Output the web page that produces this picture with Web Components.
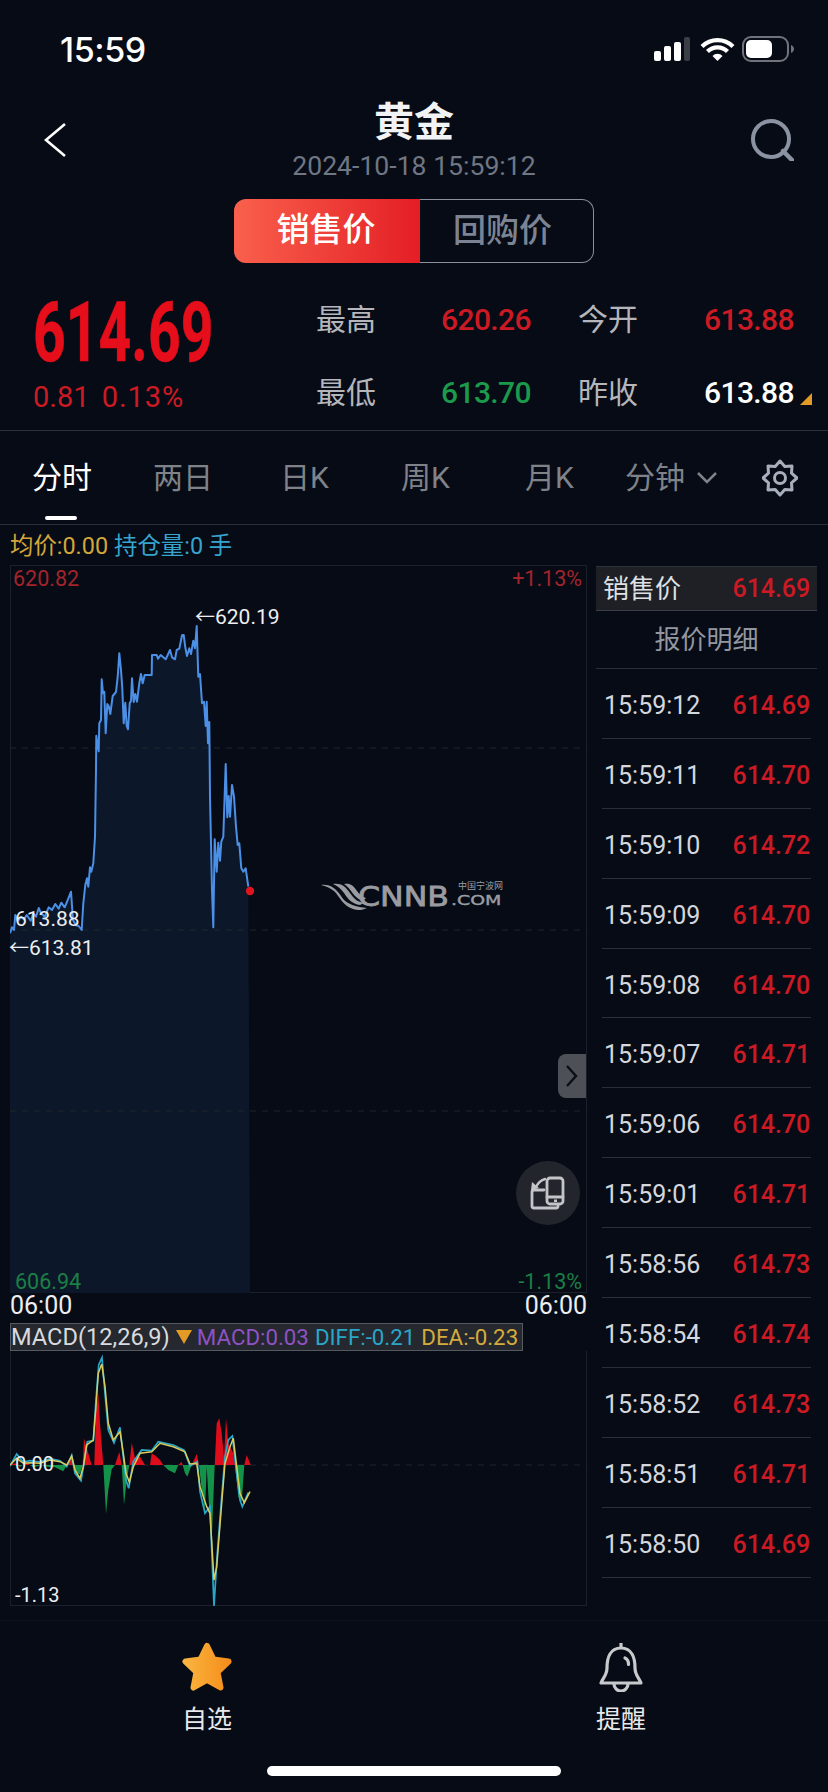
<!DOCTYPE html>
<html lang="zh">
<head>
<meta charset="utf-8">
<title>黄金</title>
<style>
  html, body { margin: 0; padding: 0; background: #070b15; }
  body { width: 828px; height: 1792px; overflow: hidden; font-family: Roboto, "Noto Sans CJK SC", sans-serif; color: #fff; }
</style>
</head>
<body>
<gold-page></gold-page>

<script>
const FONT = 'Roboto, "Noto Sans CJK SC", sans-serif';

// SHORTHAND FOR AN ELEMENT WHOSE SHADOW ROOT IS FIXED MARKUP
function shadowElement(tag, html) {
  customElements.define(tag, class extends HTMLElement {
    constructor() {
      super();
      this.attachShadow({ mode: 'open' }).innerHTML = html;
    }
  });
}

shadowElement('status-bar', `
  <style>
    :host { display: flex; height: 92px; box-sizing: border-box; padding: 32px 32px 0 60px; justify-content: space-between; align-items: flex-start; }
    .time { font: 500 34px/36px Inter, Roboto, sans-serif; letter-spacing: -.4px; }
    svg { display: block; margin-top: 4px; }
  </style>
  <span class="time">15:59</span>
  <svg width="142" height="26" viewBox="0 0 142 26">
    <rect x="0" y="15" width="7" height="10" rx="2" fill="#fff"/>
    <rect x="10" y="10" width="7" height="15" rx="2" fill="#fff"/>
    <rect x="20" y="6" width="7" height="19" rx="2" fill="#fff"/>
    <rect x="30" y="1" width="6" height="24" rx="2" fill="#3b3e45"/>
    <path d="M48 10.500a22 22 0 0 1 31 0" fill="none" stroke="#fff" stroke-width="4.200"/>
    <path d="M53.500 15.500a14 14 0 0 1 20 0" fill="none" stroke="#fff" stroke-width="4.200"/>
    <path d="M58.500 20a6.500 6.500 0 0 1 10 0l-5 5z" fill="#fff"/>
    <rect x="89" y="1" width="45" height="24" rx="8" fill="none" stroke="#70737c" stroke-width="2"/>
    <rect x="92" y="4" width="26" height="18" rx="5" fill="#fff"/>
    <path d="M137 9c2 1 3 2.500 3 4s-1 3-3 4z" fill="#70737c"/>
  </svg>
`);

shadowElement('price-switch', `
  <style>
    :host { display: flex; width: 360px; height: 64px; box-sizing: border-box; font: 500 33px/62px ${FONT}; }
    div { text-align: center; box-sizing: border-box; }
    .on { width: 186px; background: linear-gradient(90deg, #f9604c, #e41e25); border-radius: 12px 0 0 12px; color: #fff; padding-right: 2px; }
    .off { flex: 1; border: 1px solid #8a909c; border-left: 0; border-radius: 0 12px 12px 0; color: #7c8494; padding-right: 8px; }
  </style>
  <div class="on">销售价</div>
  <div class="off">回购价</div>
`);

shadowElement('quote-header', `
  <style>
    :host { display: block; height: 178px; position: relative; }
    .bar { display: grid; grid-template-columns: 1fr auto 1fr; padding: 0 44px; }
    .mid { padding-top: 6px; text-align: center; }
    h1 { margin: 0; font: 700 40px/50px ${FONT}; color: #f2f3f5; }
    .date { margin-top: 3px; font: 400 26.600px/30px Roboto, sans-serif; color: #6f7684; }
    .back { margin-top: 31px; }
    .search { margin: 27px -10px 0 0; justify-self: end; }
    price-switch { margin: 18px auto 0; }
  </style>
  <div class="bar">
    <svg class="back" width="22" height="34" viewBox="0 0 22 34"><path d="M21 1L2 17l19 16" fill="none" stroke="#fff" stroke-width="2.600"/></svg>
    <div class="mid"><h1>黄金</h1><div class="date">2024-10-18 15:59:12</div></div>
    <svg class="search" width="46" height="42" viewBox="0 0 46 42"><circle cx="23" cy="20" r="18" fill="none" stroke="#8b93a3" stroke-width="4"/><path d="M35 32l9 9" stroke="#8b93a3" stroke-width="4.500" stroke-linecap="round"/></svg>
  </div>
  <price-switch></price-switch>
`);

shadowElement('price-panel', `
  <style>
    :host { display: flex; height: 161px; box-sizing: border-box; border-bottom: 1px solid #2a2f3b; }
    .left { width: 316px; padding: 28px 0 0 33px; box-sizing: border-box; }
    .big { font: 700 84px/70px Roboto, sans-serif; color: #e60e1b; transform: scaleX(.68); transform-origin: left; white-space: nowrap; -webkit-text-stroke: .6px #e60e1b; }
    .sub { margin-top: 14px; font: 400 29px/30px Roboto, sans-serif; color: #cc1a24; white-space: nowrap; word-spacing: 5px; }
    .sub span { letter-spacing: .9px; }
    .grid { display: grid; grid-template-columns: 125px 137px 126px auto; grid-auto-rows: 50px; row-gap: 23px; padding-top: 25px; font: 400 30px/50px ${FONT}; color: #b4b6bb; }
    .num { font: 500 30px/50px Roboto, sans-serif; letter-spacing: -.6px; }
    .red { color: #cc1a24; } .green { color: #1c9a4b; } .white { color: #fff; position: relative; }
    .white::after { content: ""; position: absolute; left: 96px; top: 25px; border-style: solid; border-width: 0 0 12px 12px; border-color: transparent transparent #e49b26 transparent; }
  </style>
  <div class="left">
    <div class="big">614.69</div>
    <div class="sub">0.81 <span>0.13%</span></div>
  </div>
  <div class="grid">
    <span>最高</span><span class="num red">620.26</span><span>今开</span><span class="num red">613.88</span>
    <span>最低</span><span class="num green">613.70</span><span>昨收</span><span class="num white">613.88</span>
  </div>
`);

shadowElement('period-tabs', `
  <style>
    :host { display: grid; grid-template-columns: 121px 129px 119px 124px 100px 137px auto; height: 94px; box-sizing: border-box; padding-left: 32px; border-bottom: 1px solid #2a2f3b; font: 400 30px/94px ${FONT}; color: #7f8289; }
    .on { color: #fff; position: relative; }
    .on::after { content: ""; position: absolute; left: 13px; top: 85px; width: 32px; height: 4px; border-radius: 2px; background: #fff; }
    .more { display: flex; align-items: center; gap: 12px; height: 94px; }
    svg { display: block; }
    .gear { margin: 28px 0 0 0; }
    .k { margin-left: -2px; }
  </style>
  <span class="on">分时</span><span>两日</span><span class="k">日K</span><span>周K</span><span>月K</span>
  <span class="more">分钟<svg width="20" height="12" viewBox="0 0 20 12"><path d="M1 1l9 9 9-9" fill="none" stroke="#7f8289" stroke-width="2.500"/></svg></span>
  <svg class="gear" width="36" height="38" viewBox="0 0 36 38">
    <path d="M18 2L22.800 7.500 30 7 29.500 14.200 35 19 29.500 23.800 30 31 22.800 30.500 18 36 13.200 30.500 6 31 6.500 23.800 1 19 6.500 14.200 6 7 13.200 7.500Z" fill="none" stroke="#a8aebb" stroke-width="3" stroke-linejoin="round"/>
    <circle cx="18" cy="19" r="5.500" fill="none" stroke="#a8aebb" stroke-width="3"/>
  </svg>
`);

// MAIN CHART POINTS, TAKEN AT 3X FROM THE PAGE ORIGIN OF THE CHART CROP (0,570)
const LINE = [[30,1090],[36,1072],[42,1080],[46,1035],[55,1052],[62,1040],[72,1048],[80,1035],[92,1052],[100,1030],[108,1040],[116,1014],[122,1028],[134,1040],[146,1012],[156,1020],[166,1002],[176,1016],[184,998],[194,1012],[204,988],[213,965],[219,1050],[228,1066],[236,1068],[245,1080],[250,1000],[256,945],[261,925],[265,950],[270,892],[274,905],[280,880],[285,800],[288,600],[289,497],[292,520],[296,544],[298,460],[303,450],[305,328],[309,370],[313,365],[317,490],[322,402],[326,408],[331,432],[338,378],[348,366],[353,320],[358,250],[363,300],[367,355],[371,460],[376,398],[380,468],[384,478],[389,400],[393,392],[396,325],[401,396],[406,372],[411,395],[418,340],[423,312],[428,340],[434,315],[455,315],[456,255],[470,255],[474,266],[482,255],[490,262],[497,268],[510,240],[516,262],[525,268],[530,240],[538,236],[546,196],[551,195],[556,232],[561,258],[568,235],[573,252],[580,212],[585,235],[590,168],[595,320],[600,312],[606,400],[612,395],[617,468],[620,395],[624,520],[628,456],[630,680],[636,960],[640,1072],[644,808],[650,905],[655,818],[660,872],[664,815],[670,800],[677,582],[682,742],[686,678],[690,740],[696,645],[702,680],[708,770],[713,825],[718,820],[724,895],[730,905],[737,895],[745,950]];
const HIST = [[30,465],[45,460],[60,470],[80,458],[100,472],[125,465],[140,470],[165,472],[190,484],[200,465],[215,438],[225,488],[240,492],[248,465],[252,385],[262,420],[275,465],[283,465],[288,300],[295,250],[300,340],[310,465],[318,612],[325,540],[335,478],[345,465],[358,425],[365,465],[372,585],[380,510],[388,465],[395,398],[405,445],[420,440],[435,465],[450,465],[455,430],[470,440],[480,450],[490,465],[505,480],[525,490],[535,465],[545,455],[555,490],[562,500],[575,465],[590,432],[597,465],[605,540],[615,600],[620,470],[628,600],[636,670],[644,465],[650,340],[658,325],[665,370],[672,440],[678,325],[685,400],[700,430],[705,465],[715,560],[725,575],[733,465],[740,435],[752,465]];
const DEA = [[30,465],[50,445],[70,460],[90,458],[120,460],[150,450],[180,455],[200,465],[215,438],[225,480],[240,505],[250,470],[260,405],[280,390],[287,300],[295,190],[305,162],[315,230],[325,340],[340,390],[360,365],[370,430],[378,490],[388,517],[400,470],[420,430],[455,425],[480,400],[520,410],[555,425],[570,462],[590,460],[600,530],[620,590],[630,610],[642,810],[650,770],[665,580],[675,460],[690,410],[700,385],[710,470],[720,550],[733,578],[750,545]];
const DIFF = [[30,468],[50,432],[70,456],[90,452],[120,456],[150,446],[180,452],[200,470],[215,436],[225,490],[243,512],[252,460],[262,395],[280,392],[288,270],[296,165],[306,143],[316,260],[325,360],[342,398],[360,352],[370,440],[378,510],[386,535],[400,455],[425,420],[455,422],[475,395],[520,405],[552,420],[570,468],[592,455],[600,545],[615,610],[630,590],[642,888],[652,730],[665,560],[675,440],[685,390],[697,378],[710,490],[720,570],[727,590],[745,548]];

function toPath(points, ox, oy) {
  return points.map((p, i) => (i ? 'L' : 'M') + (p[0] / 3 + ox).toFixed(1) + ' ' + (p[1] / 3 + oy).toFixed(1)).join('');
}

customElements.define('time-chart', class extends HTMLElement {
  constructor() {
    super();
    const line = toPath(LINE, -10, 5);
    this.attachShadow({ mode: 'open' }).innerHTML = `
      <style>
        :host { display: block; position: relative; width: 577px; height: 728px; box-sizing: border-box; border: 1px solid #1b202b; font: 400 21px/24px Roboto, sans-serif; }
        .plot { display: block; position: absolute; left: -1px; top: -1px; }
        span { position: absolute; white-space: nowrap; }
        span em { font: 400 20px/24px "Noto Sans CJK SC", sans-serif; }
        .r { color: #a3242b; font-size: 21.500px; } .g { color: #1c7f45; font-size: 21.500px; } .w { color: #eceef1; }
        .hand { position: absolute; right: 0; top: 488px; width: 28px; height: 44px; border-radius: 8px 0 0 8px; background: #4e5057; display: flex; align-items: center; justify-content: center; }
        .rotate { position: absolute; left: 505px; top: 595px; }
        .logo { position: absolute; left: 310px; top: 316px; height: 30px; width: 184px; color: #9a9ca1; }
        .logo svg { display: block; }
        .logo b { position: absolute; left: 37px; top: 0; font: 400 27px/30px "DejaVu Sans", sans-serif; -webkit-text-stroke: .8px #9a9ca1; transform: scaleX(1.170); transform-origin: left; }
        .logo i { position: absolute; left: 130px; top: 6px; font: 400 14px/24px "DejaVu Sans", sans-serif; font-style: normal; -webkit-text-stroke: .4px #9a9ca1; transform: scaleX(1.350); transform-origin: left; }
        .logo u { position: absolute; left: 137px; top: -3px; text-decoration: none; font: 400 9px/14px "Noto Sans CJK SC", sans-serif; }
      </style>
      <svg class="plot" width="577" height="728" viewBox="0 0 577 728">
        <path d="${line}L240 728L0 728Z" fill="#0c1829"/>
        <g stroke="#20242d" stroke-width="1" stroke-dasharray="6 6">
          <path d="M0 183H577M0 365H577M0 546H577"/>
        </g>
        <path d="${line}" fill="none" stroke="#4b8fe6" stroke-width="2" stroke-linejoin="round"/>
        <circle cx="240" cy="326" r="4.200" fill="#e0141e"/>
      </svg>
      <span class="r" style="left:2px;top:1px">620.82</span>
      <span class="r" style="right:4px;top:1px">+1.13%</span>
      <span class="w" style="left:184px;top:38px"><em>←</em>620.19</span>
      <span class="w" style="left:4px;top:341px">613.88</span>
      <span class="w" style="left:-2px;top:369px"><em>←</em>613.81</span>
      <span class="g" style="left:4px;bottom:-2px">606.94</span>
      <span class="g" style="right:4px;bottom:-2px">-1.13%</span>
      <div class="logo">
        <svg width="50" height="30" viewBox="0 0 50 30"><path d="M0 3c10-1 15 4 20 11 4 6 9 10 26 12-4 2-9 3-14 1C22 24 19 15 13 9 9 6 5 4 0 3zM12 2c8-1 12 2 17 9 4 6 8 9 14 10l-4 2c-8-1-12-6-16-12-3-4-6-7-11-9zM23 2c6-1 9 1 13 7 3 4 5 6 9 7l-3 3c-6-2-9-6-12-10-2-3-4-5-7-7z" fill="#9a9ca1"/></svg>
        <b>CNNB</b><i>.COM</i><u>中国宁波网</u>
      </div>
      <div class="hand"><svg width="14" height="24" viewBox="0 0 14 24"><path d="M2 2l9 10-9 10" fill="none" stroke="#0b0e15" stroke-width="2.400"/></svg></div>
      <svg class="rotate" width="64" height="64" viewBox="0 0 64 64">
        <circle cx="32" cy="32" r="32" fill="#22252c"/>
        <g fill="none" stroke="#c3c5c9" stroke-width="2.800" stroke-linejoin="round" stroke-linecap="round">
          <rect x="31" y="17" width="16" height="26" rx="3"/>
          <path d="M31 36H47"/>
          <path d="M28 29H18a2 2 0 0 0-2 2V45a2 2 0 0 0 2 2H40a2 2 0 0 0 2-2"/>
          <path d="M29 18C25 19 22 22 20 26" stroke-width="2.400"/>
        </g>
        <path d="M15 29l1-8 7 6z" fill="#c3c5c9"/>
        <rect x="38" y="38.500" width="3" height="2.500" fill="#c3c5c9"/>
      </svg>
    `;
  }
});

customElements.define('macd-chart', class extends HTMLElement {
  constructor() {
    super();
    const hist = toPath(HIST, -10, -41) + 'Z';
    this.attachShadow({ mode: 'open' }).innerHTML = `
      <style>
        :host { display: block; position: relative; width: 577px; height: 255px; box-sizing: border-box; border: 1px solid #1b202b; border-top: 0; font: 400 20px/24px Roboto, sans-serif; color: #eceef1; }
        svg { display: block; position: absolute; left: -1px; top: 0; }
        span { position: absolute; left: 4px; }
      </style>
      <svg width="577" height="255" viewBox="0 0 577 255">
        <defs>
          <clipPath id="up"><rect x="0" y="0" width="577" height="114"/></clipPath>
          <clipPath id="down"><rect x="0" y="114" width="577" height="141"/></clipPath>
        </defs>
        <path d="M0 114H577" stroke="#20242d" stroke-dasharray="6 6"/>
        <path d="${hist}" fill="#dd0d1c" clip-path="url(#up)"/>
        <path d="${hist}" fill="#14924a" clip-path="url(#down)"/>
        <path d="${toPath(DIFF, -10, -41)}" fill="none" stroke="#2aa6c8" stroke-width="1.700"/>
        <path d="${toPath(DEA, -10, -41)}" fill="none" stroke="#d8cd5c" stroke-width="1.500"/>
      </svg>
      <span style="top:101px">0.00</span>
      <span style="top:232px">-1.13</span>
    `;
  }
});

shadowElement('macd-legend', `
  <style>
    :host { display: flex; align-items: center; width: 513px; height: 28px; box-sizing: border-box; background: #25282e; border: 1px solid #555960; padding-left: 0; font: 400 23.600px/26px Roboto, sans-serif; white-space: nowrap; color: #d8dade; }
    i { display: block; margin: 0 5px 0 6px; border-style: solid; border-width: 14px 8.500px 0 8.500px; border-color: #e49b26 transparent transparent transparent; }
    .a { color: #8f52c4; margin-right: 6px; } .b { color: #2aa6c8; margin-right: 6px; } .c { color: #d4ab3c; }
    span { font-size: 22.300px; }
  </style>
  MACD(12,26,9)<i></i><span class="a">MACD:0.03</span><span class="b">DIFF:-0.21</span><span class="c">DEA:-0.23</span>
`);

customElements.define('quote-row', class extends HTMLElement {
  constructor() {
    super();
    this.attachShadow({ mode: 'open' }).innerHTML = `
      <style>
        :host { display: flex; height: 69.900px; box-sizing: border-box; margin: 0 6px; padding: 5px 1px 0 2px; justify-content: space-between; align-items: center; border-bottom: 1px solid #2a2f3b; font: 400 25px/30px Roboto, sans-serif; color: #d4d7dd; }
        b { font-weight: 500; color: #cc1a24; letter-spacing: -.1px; }
      </style>
      <slot></slot><b><slot name="price"></slot></b>
    `;
  }
});

shadowElement('quote-list', `
  <style>
    :host { display: block; width: 221px; padding-top: 1px; }
    .now { display: flex; justify-content: space-between; align-items: center; height: 45px; box-sizing: border-box; padding: 0 7px; background: #1e2026; border-top: 1px solid #2e323b; border-bottom: 1px solid #3a3e48; font: 400 26px/30px ${FONT}; color: #dfe1e5; }
    .now b { font: 500 25px/30px Roboto, sans-serif; color: #cc1a24; letter-spacing: -.1px; }
    .title { height: 58px; box-sizing: border-box; border-bottom: 1px solid #2a2f3b; text-align: center; font: 400 26px/58px ${FONT}; color: #9297a1; }
  </style>
  <div class="now">销售价<b>614.69</b></div>
  <div class="title">报价明细</div>
  <slot></slot>
`);

shadowElement('bottom-nav', `
  <style>
    :host { display: grid; grid-template-columns: 414px 414px; height: 145px; box-sizing: border-box; padding-top: 21px; font: 400 25px/36px ${FONT}; color: #e8e9eb; text-align: center; }
    svg { display: block; margin: 0 auto 10px; }
  </style>
  <div>
    <svg width="50" height="50" viewBox="0 0 50 50">
      <defs><linearGradient id="s" x1="0" x2="1" y1="0" y2="0"><stop offset="0" stop-color="#fab43f"/><stop offset="1" stop-color="#f58e1b"/></linearGradient></defs>
      <path d="M25 4L31.500 17.500 46.500 19.500 35.500 30 38.500 45.500 25 38 11.500 45.500 14.500 30 3.500 19.500 18.500 17.500Z" fill="url(#s)" stroke="url(#s)" stroke-width="6" stroke-linejoin="round"/>
    </svg>
    自选
  </div>
  <div>
    <svg width="46" height="50" viewBox="0 0 46 50" fill="none" stroke="#c8c9cc" stroke-width="3.200">
      <path d="M23 1v5"/>
      <path d="M23 6C12 6 9 16 9 26c0 7-4 10-6 15h40c-2-5-6-8-6-15C37 16 34 6 23 6z" stroke-linejoin="round"/>
      <path d="M16 42a7 7 0 0 0 14 0"/>
      <path d="M27 16c2.500 1 3.500 3 3.500 6.500" stroke-linecap="round"/>
    </svg>
    提醒
  </div>
`);

shadowElement('home-bar', `
  <style>
    :host { display: block; width: 294px; height: 10px; margin: 0 auto; border-radius: 5px; background: #fff; }
  </style>
`);

shadowElement('gold-page', `
  <style>
    :host { display: block; width: 828px; height: 1792px; font-family: ${FONT}; }
    .legend { height: 40px; padding-left: 10px; font: 400 23.400px/43px ${FONT}; color: #d3a73a; box-sizing: border-box; }
    .legend span { color: #35a5cf; margin-left: 6px; }
    .body { display: flex; height: 1056px; box-sizing: border-box; padding-left: 10px; gap: 9px; border-bottom: 1px solid #0f131c; }
    .times { display: flex; justify-content: space-between; height: 30px; font: 400 25px/25px Roboto, sans-serif; color: #eceef1; }
    .times span { display: block; }
    .left { width: 577px; }
  </style>
  <status-bar></status-bar>
  <quote-header></quote-header>
  <price-panel></price-panel>
  <period-tabs></period-tabs>
  <div class="legend">均价:0.00<span>持仓量:0 手</span></div>
  <div class="body">
    <div class="left">
      <time-chart></time-chart>
      <div class="times"><span>06:00</span><span>06:00</span></div>
      <macd-legend></macd-legend>
      <macd-chart></macd-chart>
    </div>
    <quote-list><slot></slot></quote-list>
  </div>
  <bottom-nav></bottom-nav>
  <home-bar></home-bar>
`);

// FILL THE QUOTE LIST FROM DATA
const rows = [['15:59:12','614.69'],['15:59:11','614.70'],['15:59:10','614.72'],['15:59:09','614.70'],['15:59:08','614.70'],['15:59:07','614.71'],['15:59:06','614.70'],['15:59:01','614.71'],['15:58:56','614.73'],['15:58:54','614.74'],['15:58:52','614.73'],['15:58:51','614.71'],['15:58:50','614.69']];
let gold = document.querySelector('gold-page');
rows.forEach(r => {
  let row = document.createElement('quote-row');
  row.append(r[0]);
  let price = document.createElement('span');
  price.slot = 'price';
  price.textContent = r[1];
  row.appendChild(price);
  gold.appendChild(row);
});
</script>
</body>
</html>
